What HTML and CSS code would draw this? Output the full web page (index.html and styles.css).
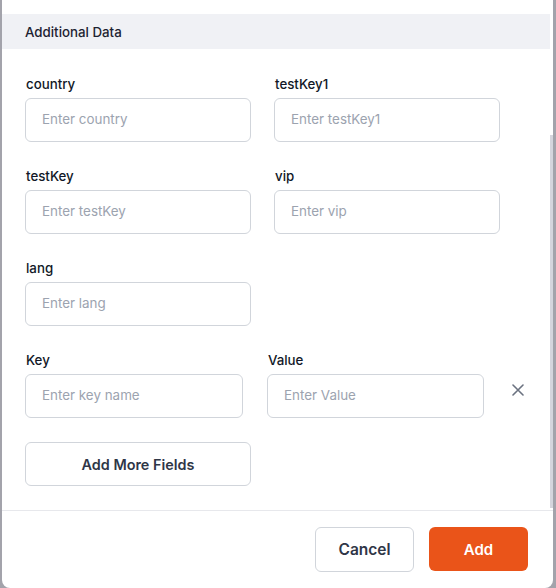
FILE: index.html
```html
<!DOCTYPE html>
<html lang="en">
<head>
<meta charset="utf-8">
<title>Additional Data</title>
<link rel="stylesheet" href="styles.css">
</head>
<body>
<div class="modal">
  <div class="body">
    <div class="section-title">Additional Data</div>
    <div class="content">
      <div class="grid">
        <div class="field">
          <label class="label">country</label>
          <input class="input" placeholder="Enter country">
        </div>
        <div class="field">
          <label class="label">testKey1</label>
          <input class="input" placeholder="Enter testKey1">
        </div>
        <div class="field">
          <label class="label">testKey</label>
          <input class="input" placeholder="Enter testKey">
        </div>
        <div class="field">
          <label class="label">vip</label>
          <input class="input" placeholder="Enter vip">
        </div>
        <div class="field">
          <label class="label">lang</label>
          <input class="input" placeholder="Enter lang">
        </div>
      </div>
      <div class="kv-row">
        <div class="field kv-key">
          <label class="label">Key</label>
          <input class="input" placeholder="Enter key name">
        </div>
        <div class="field kv-value">
          <label class="label">Value</label>
          <input class="input" placeholder="Enter Value">
        </div>
        <button class="remove" aria-label="Remove">
          <svg width="12" height="12" viewBox="0 0 12 12" fill="none" stroke="#6b7280" stroke-width="1.6" stroke-linecap="round"><path d="M1 1L11 11M11 1L1 11"/></svg>
        </button>
      </div>
      <button class="btn-outline more">Add More Fields</button>
    </div>
    <div class="scroll-thumb"></div>
  </div>
  <div class="footer">
    <button class="btn-outline cancel">Cancel</button>
    <button class="btn-primary">Add</button>
  </div>
</div>
</body>
</html>
```

FILE: styles.css
```css
* { box-sizing: border-box; }
html, body { margin: 0; padding: 0; }
body {
  background: #a3a3ab;
  font-family: Inter, "Noto Sans", sans-serif;
  width: 556px;
  height: 588px;
  overflow: hidden;
}
.modal {
  margin-left: 2px;
  width: 551px;
  height: 588px;
  background: #ffffff;
  border-radius: 0 0 8px 8px;
  display: flex;
  flex-direction: column;
}
.body {
  position: relative;
  height: 511px;
  padding-top: 14px;
  border-bottom: 1px solid #e7e8ec;
}
.section-title {
  height: 35px;
  margin-right: 3px;
  background: #f0f1f5;
  padding-left: 23px;
  display: flex;
  align-items: center;
  font-size: 13.3px;
  font-weight: 500;
  color: #1d2231;
}
.content {
  padding: 25px 0 0 23px;
}
.grid {
  display: grid;
  grid-template-columns: 226px 226px;
  column-gap: 23px;
  row-gap: 24px;
}
.field {
  display: flex;
  flex-direction: column;
  gap: 4px;
}
.label {
  font-size: 13.3px;
  line-height: 20px;
  font-weight: 500;
  color: #111827;
  padding-left: 1px;
}
.input {
  height: 44px;
  width: 100%;
  border: 1px solid #d1d5db;
  border-radius: 6px;
  padding: 0 15px 2px 16px;
  font-family: inherit;
  font-size: 13.4px;
  color: #111827;
  background: #fff;
  outline: none;
}
.input::placeholder { color: #9ca3af; }
.kv-row {
  margin-top: 24px;
  display: flex;
  align-items: flex-end;
}
.kv-key { width: 218px; }
.kv-value { width: 217px; margin-left: 24px; }
.remove {
  width: 44px;
  height: 44px;
  margin-left: 12px;
  margin-bottom: 6px;
  border: none;
  background: none;
  padding: 0;
  display: flex;
  align-items: center;
  justify-content: center;
}
.btn-outline {
  border: 1px solid #d1d5db;
  border-radius: 6px;
  background: #fff;
  font-family: inherit;
  font-weight: 600;
  color: #2f3647;
}
.more {
  margin-top: 24px;
  width: 226px;
  height: 44px;
  font-size: 14.4px;
}
.scroll-thumb {
  position: absolute;
  right: 0;
  top: 135px;
  width: 3px;
  height: 373px;
  background: #d5d5dd;
}
.footer {
  flex: 1;
  display: flex;
  justify-content: flex-end;
  align-items: flex-start;
  gap: 15px;
  padding: 16px 25px 0 0;
}
.cancel {
  width: 99px;
  height: 45px;
  font-size: 15.5px;
}
.btn-primary {
  width: 99px;
  height: 44px;
  border: none;
  border-radius: 6px;
  background: #ea5419;
  color: #ffffff;
  font-family: inherit;
  font-weight: 600;
  font-size: 15px;
}
```
